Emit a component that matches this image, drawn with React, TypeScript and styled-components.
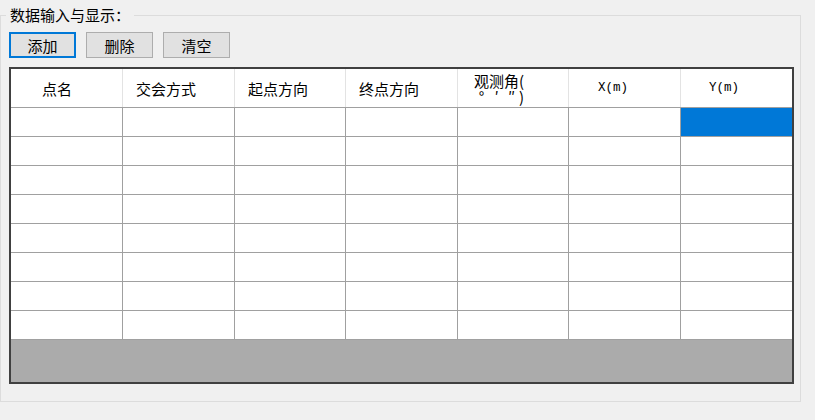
import React from "react";
import styled, {createGlobalStyle} from "styled-components";

const GlobalStyle = createGlobalStyle`
  body {
    margin: 0;
    background: #f0f0f0;
    font-family: "Noto Sans CJK SC", "Microsoft YaHei", sans-serif;
    font-size: 15px;
    color: #000;
  }
`

const columnWidths = "112px 112px 111px 112px 111px 112px 111px"

type Column = {
    title: string
    pad: number
    mono?: boolean
}

const columns: Column[] = [
    {title: "点名", pad: 31},
    {title: "交会方式", pad: 13},
    {title: "起点方向", pad: 13},
    {title: "终点方向", pad: 13},
    {title: "angle", pad: 16},
    {title: "X(m)", pad: 29, mono: true},
    {title: "Y(m)", pad: 28, mono: true},
]

const rowCount = 8

function AngleTitle() {
    return (
        <Wrapped>
            <Line>观测角(</Line>
            <Line>
                <Mark>°</Mark><Mark>′</Mark><Mark>″</Mark>)
            </Line>
        </Wrapped>
    )
}

export default function App() {
    return (
        <>
            <GlobalStyle/>
            <GroupBox>
                <Legend>数据输入与显示：</Legend>
                <Toolbar>
                    <Button $focused>添加</Button>
                    <Button>删除</Button>
                    <Button>清空</Button>
                </Toolbar>
                <DataGrid>
                    <HeaderRow>
                        {columns.map((c, i) => (
                            <HeaderCell key={i} $pad={c.pad} $mono={c.mono} $last={i === columns.length - 1}>
                                {c.title === "angle" ? <AngleTitle/> : c.title}
                            </HeaderCell>
                        ))}
                    </HeaderRow>
                    {Array.from({length: rowCount}).map((_, r) => (
                        <Row key={r}>
                            {columns.map((_, i) => (
                                <Cell key={i} $last={i === columns.length - 1}
                                      $selected={r === 0 && i === columns.length - 1}/>
                            ))}
                        </Row>
                    ))}
                    <Filler/>
                </DataGrid>
            </GroupBox>
        </>
    )
}

const GroupBox = styled.fieldset`
  box-sizing: border-box;
  width: 801px;
  margin: 5px 0 0 0;
  padding: 7px 6px 17px 8px;
  border: 1px solid #dcdcdc;
  min-width: 0;
`
const Legend = styled.legend`
  margin-left: -3px;
  padding: 0 4px;
  line-height: 20px;
  font-size: 15px;
`
const Toolbar = styled.div`
  display: flex;
  gap: 10px;
  margin-bottom: 9px;
`
const Button = styled.button<{ $focused?: boolean }>`
  box-sizing: border-box;
  width: 67px;
  height: 26px;
  padding: 0;
  font-family: inherit;
  font-size: 15px;
  line-height: 1;
  color: #000;
  background: #e1e1e1;
  border: ${p => p.$focused ? "2px solid #0078d7" : "1px solid #adadad"};
  border-radius: 0;
`
const DataGrid = styled.div`
  box-sizing: border-box;
  width: 785px;
  height: 317px;
  display: flex;
  flex-direction: column;
  border: 2px solid #404040;
  background: #fff;
`
const HeaderRow = styled.div`
  display: grid;
  grid-template-columns: ${columnWidths};
  height: 39px;
  box-sizing: border-box;
  border-bottom: 1px solid #a0a0a0;
  background: #fff;
`
const HeaderCell = styled.div<{ $pad: number, $mono?: boolean, $last?: boolean }>`
  display: flex;
  align-items: center;
  padding-left: ${p => p.$pad}px;
  border-right: ${p => p.$last ? "none" : "1px solid #e3e3e3"};
  font-family: ${p => p.$mono ? `"Liberation Mono", "DejaVu Sans Mono", monospace` : "inherit"};
  font-size: ${p => p.$mono ? "12.5px" : "15px"};
  white-space: nowrap;
`
const Wrapped = styled.div`
  align-self: flex-start;
  display: flex;
  flex-direction: column;
  padding-top: 4px;
`
const Line = styled.span`
  display: block;
  height: 16px;
  line-height: 16px;
  font-size: 15px;
`
const Mark = styled.span`
  display: inline-block;
  width: 15px;
  text-align: center;
`
const Row = styled.div`
  display: grid;
  grid-template-columns: ${columnWidths};
  height: 29px;
  box-sizing: border-box;
  border-bottom: 1px solid #a0a0a0;
`
const Cell = styled.div<{ $last?: boolean, $selected?: boolean }>`
  background: ${p => p.$selected ? "#0078d7" : "#fff"};
  border-right: ${p => p.$last ? "none" : "1px solid #a0a0a0"};
`
const Filler = styled.div`
  flex: 1;
  background: #ababab;
`
